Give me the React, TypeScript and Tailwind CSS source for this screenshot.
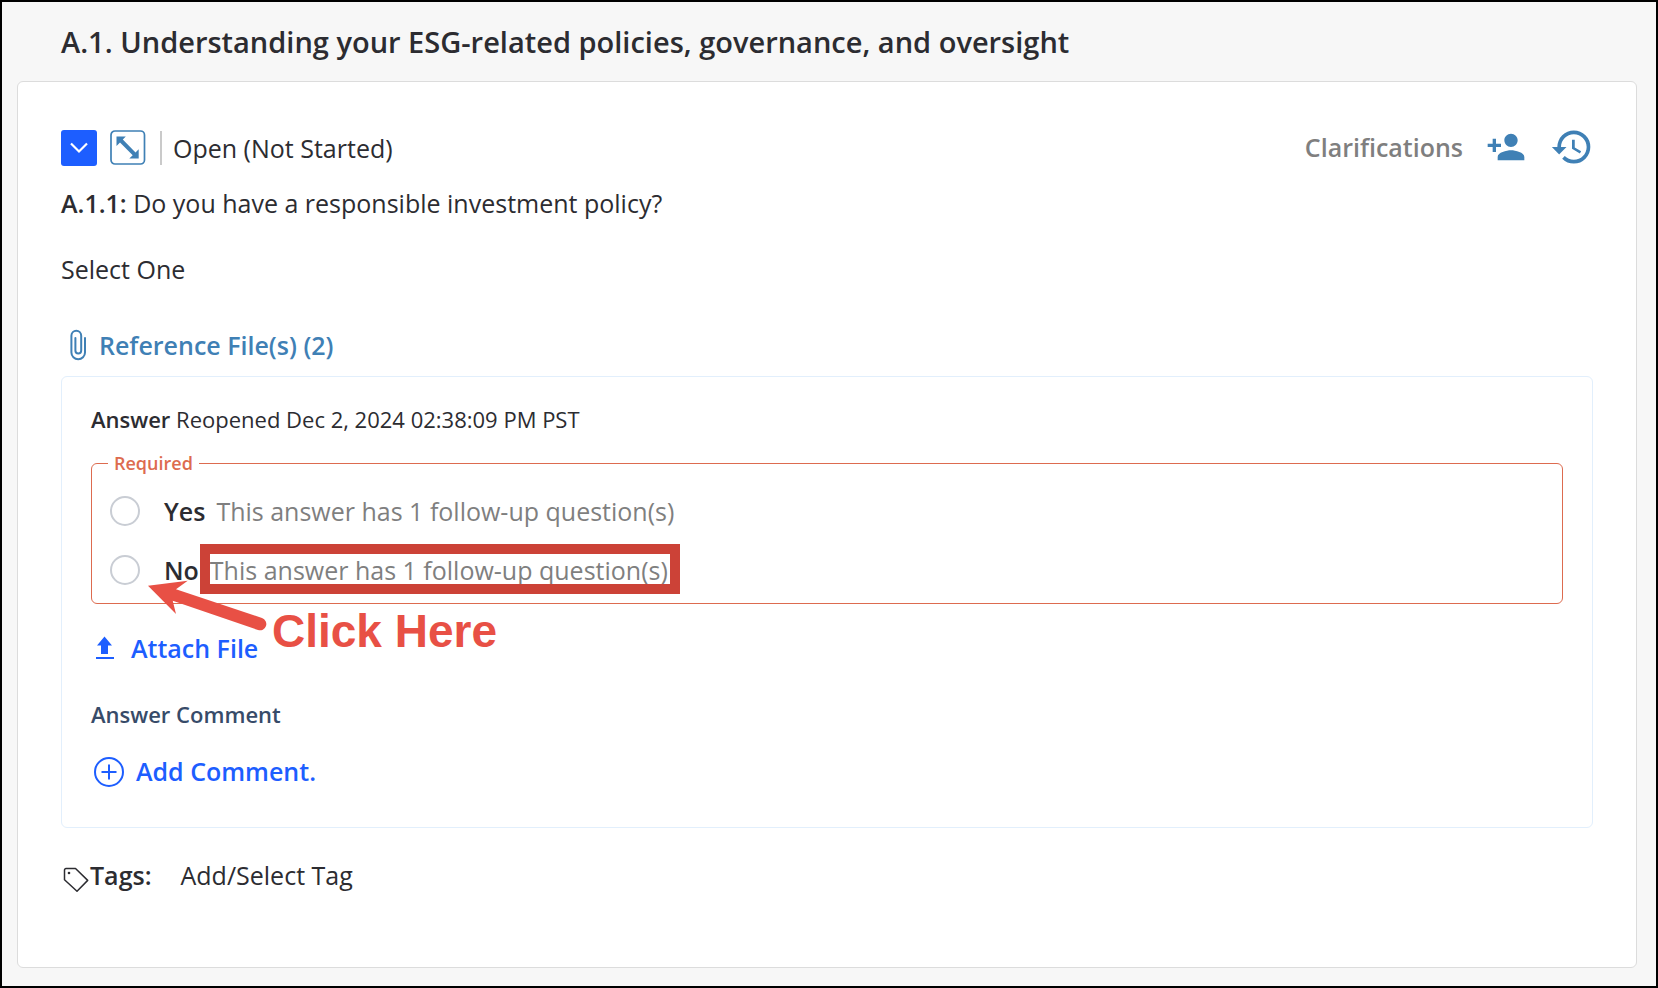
import type { ReactNode } from "react";
import { MdHistory, MdPersonAdd } from "react-icons/md";

function ChevronIcon() {
  return (
    <svg viewBox="0 0 36 36" className="h-9 w-9" fill="none" stroke="#fff" strokeWidth="2.2" aria-hidden="true">
      <path d="M10 13.500l8 8 8-8" />
    </svg>
  );
}

function ExpandIcon() {
  return (
    <svg viewBox="0 0 36 36" className="h-9 w-9" aria-hidden="true">
      <rect x="1" y="1" width="33.5" height="33" rx="4" fill="#fff" stroke="#3f80b5" strokeWidth="1.7" />
      <path d="M6.500 6.500h9.300l-3 3L25.500 22.500L28.700 19.300V28.500H19.300L22.700 25.200L10 12.600L6.500 16z" fill="#3f80b5" />
    </svg>
  );
}

function PaperclipIcon() {
  return (
    <svg viewBox="0 0 18 32" className="h-8 w-[18px]" fill="none" stroke="#3f80b5" strokeWidth="2" strokeLinecap="round" aria-hidden="true">
      <path d="M16 9v14.500a6.800 6.800 0 0 1-13.600 0V6.700a4.900 4.900 0 0 1 9.800 0V21.500a2.900 2.900 0 0 1-5.800 0V9" />
    </svg>
  );
}

function UploadIcon() {
  return (
    <svg viewBox="0 0 20 24" className="h-6 w-5" fill="#1d5eff" aria-hidden="true">
      <path d="M9.500 0.500L17 9.500h-4V18H6V9.500H2z" />
      <rect x="1" y="21" width="18" height="2" />
    </svg>
  );
}

function PlusCircleIcon() {
  return (
    <svg viewBox="0 0 32 32" className="h-8 w-8" fill="none" stroke="#1d5eff" strokeWidth="2" aria-hidden="true">
      <circle cx="16" cy="17" r="14" />
      <path d="M16 9.500v15M8.500 17h15" />
    </svg>
  );
}

function TagIcon() {
  return (
    <svg viewBox="0 0 26 26" className="h-[26px] w-[26px]" fill="none" stroke="#2c2c31" strokeWidth="1.500" strokeLinejoin="round" aria-hidden="true">
      <path d="M1.500 3a1.500 1.500 0 0 1 1.500-1.500h9.500L24.700 13.400 14 24.300 1.500 12.800z" />
      <circle cx="6" cy="6" r="1.300" fill="#2c2c31" stroke="none" />
    </svg>
  );
}

function AnswerOption({ id, label, children }: { id: string; label: string; children: ReactNode }) {
  return (
    <div className="flex h-9 items-center">
      <input
        type="radio"
        id={id}
        name="answer"
        className="mr-6 h-[30px] w-[30px] shrink-0 appearance-none rounded-full border-2 border-[#c9cdd4] bg-white checked:border-8 checked:border-[#1d5eff]"
      />
      <label htmlFor={id} className="flex items-center gap-[11px]">
        <span className="font-semibold">{label}</span>
        {children}
      </label>
    </div>
  );
}

function FollowUpNote() {
  return <span className="text-[#7f7f7f]">This answer has 1 follow-up question(s)</span>;
}

export default function App() {
  return (
    <main className="flex min-h-screen flex-col border-2 border-black bg-[#f7f7f7] px-[15px] pb-[18px] font-['Open_Sans',sans-serif] text-[25px] leading-9 text-[#2c2c31]">
      <h1 className="px-11 pt-5 pb-[19px] text-[29px] leading-10 font-semibold">
        A.1. Understanding your ESG-related policies, governance, and oversight
      </h1>

      <section className="mr-1 flex-1 rounded-md border border-[#dcdcdc] bg-white px-[43px] pt-12">
        <header className="flex h-9 items-center">
          <button type="button" aria-label="Collapse question" className="mr-[13px] rounded-[3px] bg-[#1d5eff]">
            <ChevronIcon />
          </button>
          <button type="button" aria-label="Expand question" className="mr-3.5">
            <ExpandIcon />
          </button>
          <div className="mr-[11px] h-[34px] w-0.5 bg-[#cacaca]" />
          <p>Open (Not Started)</p>
          <div className="-mr-px ml-auto flex h-[34px] items-center self-start">
            <button type="button" className="mr-[23px] font-semibold text-[#7f7f7f]">
              Clarifications
            </button>
            <button type="button" aria-label="Assign a person" className="mr-6 text-[#3f80b5]">
              <MdPersonAdd className="h-10 w-10" />
            </button>
            <button type="button" aria-label="History" className="text-[#3f80b5]">
              <MdHistory className="h-11 w-11" />
            </button>
          </div>
        </header>

        <p className="mt-[19px]">
          <strong className="font-semibold">A.1.1:</strong> Do you have a responsible investment policy?
        </p>
        <p className="mt-[30px]">Select One</p>

        <button type="button" className="mt-10 ml-2 flex items-center gap-3 font-semibold text-[#3f80b5]">
          <PaperclipIcon />
          Reference File(s) (2)
        </button>

        <div className="mt-[13px] rounded-md border border-[#e2effc] px-[29px] pt-[27px] pb-[38px]">
          <p className="text-[22px] leading-[30px]">
            <strong className="font-semibold">Answer</strong> Reopened Dec 2, 2024 02:38:09 PM PST
          </p>

          <fieldset className="relative mt-4 rounded-md border border-[#dd6b4f] pr-4 pb-[15px] pl-[18px]">
            <legend className="-ml-0.5 px-1.5 text-[18px] leading-[26px] font-semibold text-[#dd6b4f]">Required</legend>
            <div className="flex flex-col gap-[23px] pt-[17px]">
              <AnswerOption id="answer-yes" label="Yes">
                <FollowUpNote />
              </AnswerOption>
              <AnswerOption id="answer-no" label="No">
                <span className="relative">
                  <FollowUpNote />
                  <span className="absolute -top-2 -right-3 -bottom-1.5 -left-2.5 border-10 border-[#cc4237]" />
                </span>
              </AnswerOption>
            </div>
            <svg viewBox="0 0 120 52" className="absolute top-[103px] left-[55px] h-[52px] w-[120px]" fill="#e85045" aria-hidden="true">
              <path d="M1 6.700L40.700 1.700L29 10.300L115 39A6 6 0 0 1 111 51L25.700 21.700L29 35z" />
            </svg>
            <span className="absolute top-[128px] left-[180px] font-['Liberation_Sans',sans-serif] text-[46px] leading-[54px] font-bold whitespace-nowrap text-[#e85045]">
              Click Here
            </span>
          </fieldset>

          <button type="button" className="mt-[26px] ml-1 flex items-center gap-4 font-semibold text-[#1d5eff]">
            <UploadIcon />
            Attach File
          </button>

          <h2 className="mt-[33px] text-[22px] leading-[30px] font-semibold text-[#374b69]">Answer Comment</h2>
          <button type="button" className="mt-6 ml-0.5 flex items-center gap-[11px] font-semibold text-[#1d5eff]">
            <PlusCircleIcon />
            Add Comment.
          </button>
        </div>

        <div className="mt-[29px] flex items-end">
          <div className="ml-0.5 flex items-end gap-px">
            <TagIcon />
            <span className="font-semibold">Tags:</span>
          </div>
          <button type="button" className="ml-[29px]">
            Add/Select Tag
          </button>
        </div>
      </section>
    </main>
  );
}
